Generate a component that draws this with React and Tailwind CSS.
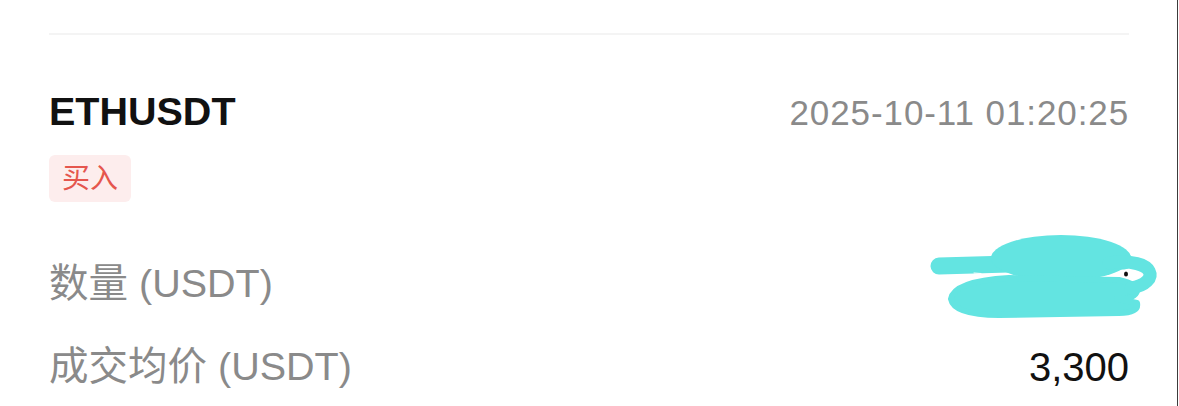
export default function App() {
  return (
    <div className="w-[1178px] h-[406px] overflow-hidden bg-white border-r border-[#3c3c3c] font-['Liberation_Sans','Noto_Sans_CJK_SC',sans-serif]">
      <div className="pl-[49px] pr-[48px]">
        <div className="mt-[33px] h-[2px] bg-[#f4f4f4]" />

        <div className="mt-[54px] flex items-center justify-between h-[46px]">
          <div className="text-[39.5px] font-bold text-[#111] leading-none">ETHUSDT</div>
          <div className="text-[35px] tracking-[0.9px] text-[#8a8a8a] leading-none">2025-10-11 01:20:25</div>
        </div>

        <div className="mt-[20px] flex">
          <span className="h-[47px] px-[13px] flex items-center rounded-[6px] bg-[#fdeded] text-[#e5564e] text-[28px] leading-none">
            买入
          </span>
        </div>

        <div className="mt-[40px]">
          <div className="relative h-[83px] flex items-center justify-between">
            <span className="text-[39.5px] text-[#8a8a8a] leading-none">数量 (USDT)</span>
            {/* redacted value */}
            <svg
              className="absolute right-[-35px] top-[-13px]"
              width="240"
              height="95"
              viewBox="925 230 240 95"
            >
              <g fill="#63e4e1" stroke="#63e4e1" strokeLinecap="round" strokeLinejoin="round">
                <path d="M940 267 L1125 262" strokeWidth="17" fill="none" />
                <ellipse cx="1062" cy="259" rx="70" ry="23" stroke="none" />
                <path d="M952 300 Q955 282 1010 279 L1120 281 Q1138 285 1138 292 Q1136 300 1118 300 L1138 304 Q1140 314 1120 314 L1000 316 Q955 316 952 300 Z" strokeWidth="6" />
                <path d="M1110 264 C1158 258 1162 284 1132 289" strokeWidth="13" fill="none" />
              </g>
              <path d="M975 274 L982 274.5" stroke="#ffffff" strokeWidth="1" strokeLinecap="round" />
              <path d="M1115 275 Q1125 271 1137 276 Q1125 278 1115 275 Z" fill="#ffffff" />
              <ellipse cx="1127" cy="275" rx="2" ry="2.6" fill="#111" />
            </svg>
          </div>
          <div className="h-[83px] flex items-center justify-between">
            <span className="text-[39.5px] text-[#8a8a8a] leading-none">成交均价 (USDT)</span>
            <span className="text-[40px] text-[#111] leading-none">3,300</span>
          </div>
        </div>
      </div>
    </div>
  );
}
